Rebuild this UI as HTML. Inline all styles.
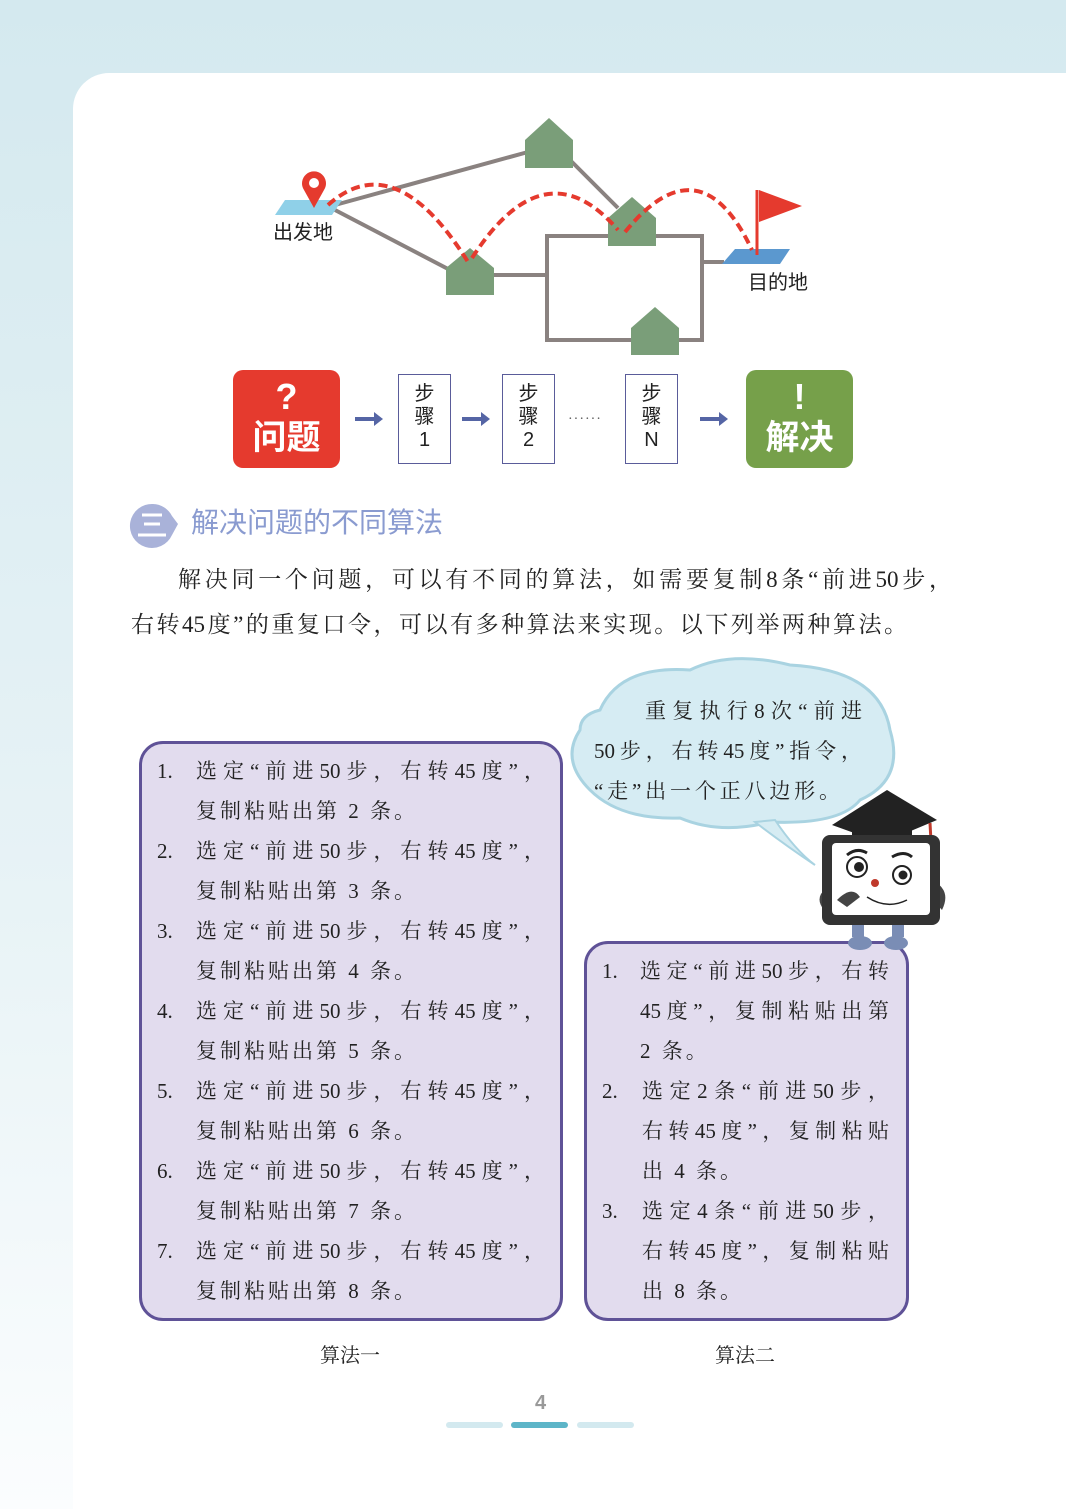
<!DOCTYPE html>
<html><head><meta charset="utf-8"><style>
body{margin:0;width:1066px;height:1509px;position:relative;overflow:hidden;background:linear-gradient(#d4e9ef,#e8f3f6 60%,#fbfdfe);font-family:"Liberation Serif","Noto Serif CJK SC",serif;color:#222}
.card{position:absolute;left:73px;top:73px;right:0;bottom:0;background:#fff;border-top-left-radius:36px}
.abs{position:absolute}
.j{position:absolute;text-align:justify;text-align-last:justify;white-space:nowrap;font-size:21px;line-height:24px}
.n{position:absolute;font-size:21px;line-height:24px}
.box{position:absolute;background:#e2dcee;border:3px solid #5f5297;border-radius:24px;box-sizing:border-box}
.step{position:absolute;top:374px;width:53px;height:90px;border:1.5px solid #5a5c9a;box-sizing:border-box;font-family:"Liberation Sans","Noto Sans CJK SC",sans-serif;font-size:20px;line-height:23px;text-align:center;padding-top:8px;background:#fff}
.big{position:absolute;top:370px;width:107px;height:98px;border-radius:10px;color:#fff;font-family:"Liberation Sans","Noto Sans CJK SC",sans-serif;font-weight:bold;text-align:center}
</style></head><body>
<div class="card"></div>
<svg class="abs" style="left:0;top:0" width="1066" height="480">
<g stroke="#8a8280" stroke-width="4" fill="none">
<line x1="335" y1="205" x2="528" y2="152"/><line x1="335" y1="210" x2="450" y2="270"/>
<line x1="570" y1="160" x2="618" y2="208"/><line x1="494" y1="275" x2="547" y2="275"/>
<rect x="547" y="236" width="155" height="104"/><line x1="702" y1="262" x2="724" y2="262"/>
</g>
<g fill="#7a9e79">
<polygon points="525,168 525,140 549,118 573,140 573,168"/>
<polygon points="446,295 446,268 470,248 494,268 494,295"/>
<polygon points="608,246 608,218 632,197 656,218 656,246"/>
<polygon points="631,355 631,328 655,307 679,328 679,355"/>
</g>
<polygon points="285,200 342,200 332,215 275,215" fill="#8fd0e8"/>
<polygon points="735,249 790,249 780,264 722,264" fill="#5b98cf"/>
<path d="M314,208 L304,190 A12,12 0 1 1 324,190 Z" fill="#e53a2e"/><circle cx="314" cy="183" r="5" fill="#fff"/>
<line x1="757" y1="190" x2="757" y2="255" stroke="#e53a2e" stroke-width="3"/>
<polygon points="759,190 802,206 759,222" fill="#e53a2e"/>
<g stroke="#e53a2e" stroke-width="4" stroke-dasharray="9,5" fill="none">
<path d="M328,205 Q395,145 468,262"/><path d="M472,258 Q545,145 618,230"/><path d="M625,232 Q700,140 752,250"/>
</g>
<text x="273" y="239" font-family="Liberation Sans,Noto Sans CJK SC,sans-serif" font-size="20" fill="#222">出发地</text>
<text x="748" y="289" font-family="Liberation Sans,Noto Sans CJK SC,sans-serif" font-size="20" fill="#222">目的地</text>
<g fill="#5565a5"><rect x="355" y="417" width="20" height="4"/><polygon points="374,412 383,419 374,426"/>
<rect x="462" y="417" width="20" height="4"/><polygon points="481,412 490,419 481,426"/>
<rect x="700" y="417" width="20" height="4"/><polygon points="719,412 728,419 719,426"/></g>
<text x="568" y="423" font-size="14" fill="#555" letter-spacing="1">······</text>
</svg>
<div class="big" style="left:233px;background:#e53a2e"><div style="font-size:36px;line-height:42px;margin-top:6px">?</div><div style="font-size:34px;line-height:40px">问题</div></div>
<div class="big" style="left:746px;background:#76a04a"><div style="font-size:36px;line-height:42px;margin-top:6px">!</div><div style="font-size:34px;line-height:40px">解决</div></div>
<div class="step" style="left:398px">步<br>骤<br>1</div>
<div class="step" style="left:502px">步<br>骤<br>2</div>
<div class="step" style="left:625px">步<br>骤<br>N</div>
<svg class="abs" style="left:128px;top:502px" width="50" height="46"><path d="M25,2 A22,22 0 1 0 44,33 L50,22 L44,14 A22,22 0 0 0 25,2Z" fill="#a9b2d9"/><g stroke="#fff" stroke-width="3"><line x1="14" y1="13" x2="34" y2="13"/><line x1="16" y1="22" x2="32" y2="22"/><line x1="10" y1="33" x2="38" y2="33"/></g></svg>
<div class="abs" style="left:191px;top:505px;font-family:'Liberation Sans','Noto Sans CJK SC',sans-serif;font-size:28px;line-height:36px;color:#8a9bd0">解决问题的不同算法</div>
<div class="j" style="left:178px;top:566px;width:774px;font-size:23px;line-height:28px">解决同一个问题，可以有不同的算法，如需要复制8条“前进50步，</div>
<div class="j" style="left:131px;top:611px;width:776px;font-size:23px;line-height:28px">右转45度”的重复口令，可以有多种算法来实现。以下列举两种算法。</div>
<svg class="abs" style="left:560px;top:650px" width="340" height="230">
<path d="M40,60 Q60,15 130,20 Q170,0 230,15 Q320,20 330,80 Q345,130 300,150 Q280,175 210,172 Q160,185 120,168 Q60,170 30,140 Q0,110 20,80 Q20,65 40,60Z" fill="#d6ecf3" stroke="#a9d3e1" stroke-width="3"/>
<path d="M215,170 Q235,200 255,215 Q225,195 195,172Z" fill="#d6ecf3" stroke="#a9d3e1" stroke-width="2"/>
</svg>
<div class="j" style="left:645px;top:699px;width:217px">重复执行8次“前进</div>
<div class="j" style="left:594px;top:739px;width:268px">50步，右转45度”指令，</div>
<div class="j" style="left:594px;top:779px;width:246px">“走”出一个正八边形。</div>
<div class="box" style="left:139px;top:741px;width:424px;height:580px"></div>
<div class="box" style="left:584px;top:941px;width:325px;height:380px"></div>
<svg class="abs" style="left:812px;top:785px" width="145" height="170">
<polygon points="20,40 75,5 125,35 70,58" fill="#222"/><rect x="40" y="38" width="60" height="22" fill="#222"/>
<path d="M118,38 L120,75" stroke="#c0392b" stroke-width="3"/>
<path d="M20,100 Q0,110 12,125 L25,112Z" fill="#444"/><path d="M120,95 Q140,105 130,125 L118,112Z" fill="#444"/>
<rect x="10" y="50" width="118" height="90" rx="8" fill="#333"/><rect x="20" y="58" width="98" height="72" rx="4" fill="#fff"/>
<circle cx="45" cy="82" r="10" fill="#fff" stroke="#222" stroke-width="2"/><circle cx="47" cy="82" r="5" fill="#222"/>
<circle cx="90" cy="90" r="9" fill="#fff" stroke="#222" stroke-width="2"/><circle cx="91" cy="90" r="4.5" fill="#222"/>
<circle cx="63" cy="98" r="4" fill="#c0392b"/><path d="M55,112 Q75,125 95,115" stroke="#222" fill="none" stroke-width="1.5"/>
<path d="M35,70 Q45,62 55,68 M80,72 Q92,65 100,72" stroke="#222" stroke-width="3" fill="none"/>
<path d="M25,115 Q40,100 48,112 L35,122Z" fill="#444"/>
<rect x="40" y="140" width="12" height="12" fill="#7a8db5"/><rect x="80" y="140" width="12" height="12" fill="#7a8db5"/>
<ellipse cx="48" cy="158" rx="12" ry="7" fill="#7a8db5"/><ellipse cx="84" cy="158" rx="12" ry="7" fill="#7a8db5"/>
</svg>
<div class="n" style="left:157px;top:759px">1.</div>
<div class="n" style="left:157px;top:839px">2.</div>
<div class="n" style="left:157px;top:919px">3.</div>
<div class="n" style="left:157px;top:999px">4.</div>
<div class="n" style="left:157px;top:1079px">5.</div>
<div class="n" style="left:157px;top:1159px">6.</div>
<div class="n" style="left:157px;top:1239px">7.</div>
<div class="j" style="left:196px;top:759px;width:349px">选定“前进50步，右转45度”，</div>
<div class="abs" style="left:196px;top:799px;font-size:21px;line-height:24px;letter-spacing:3px">复制粘贴出第 2 条。</div>
<div class="j" style="left:196px;top:839px;width:349px">选定“前进50步，右转45度”，</div>
<div class="abs" style="left:196px;top:879px;font-size:21px;line-height:24px;letter-spacing:3px">复制粘贴出第 3 条。</div>
<div class="j" style="left:196px;top:919px;width:349px">选定“前进50步，右转45度”，</div>
<div class="abs" style="left:196px;top:959px;font-size:21px;line-height:24px;letter-spacing:3px">复制粘贴出第 4 条。</div>
<div class="j" style="left:196px;top:999px;width:349px">选定“前进50步，右转45度”，</div>
<div class="abs" style="left:196px;top:1039px;font-size:21px;line-height:24px;letter-spacing:3px">复制粘贴出第 5 条。</div>
<div class="j" style="left:196px;top:1079px;width:349px">选定“前进50步，右转45度”，</div>
<div class="abs" style="left:196px;top:1119px;font-size:21px;line-height:24px;letter-spacing:3px">复制粘贴出第 6 条。</div>
<div class="j" style="left:196px;top:1159px;width:349px">选定“前进50步，右转45度”，</div>
<div class="abs" style="left:196px;top:1199px;font-size:21px;line-height:24px;letter-spacing:3px">复制粘贴出第 7 条。</div>
<div class="j" style="left:196px;top:1239px;width:349px">选定“前进50步，右转45度”，</div>
<div class="abs" style="left:196px;top:1279px;font-size:21px;line-height:24px;letter-spacing:3px">复制粘贴出第 8 条。</div>
<div class="n" style="left:602px;top:959px">1.</div>
<div class="n" style="left:602px;top:1079px">2.</div>
<div class="n" style="left:602px;top:1199px">3.</div>
<div class="j" style="left:640px;top:959px;width:249px">选定“前进50步，右转</div>
<div class="j" style="left:640px;top:999px;width:249px">45度”，复制粘贴出第</div>
<div class="abs" style="left:640px;top:1039px;font-size:21px;line-height:24px;letter-spacing:3px">2 条。</div>
<div class="j" style="left:642px;top:1079px;width:247px">选定2条“前进50步，</div>
<div class="j" style="left:642px;top:1119px;width:247px">右转45度”，复制粘贴</div>
<div class="abs" style="left:642px;top:1159px;font-size:21px;line-height:24px;letter-spacing:3px">出 4 条。</div>
<div class="j" style="left:642px;top:1199px;width:247px">选定4条“前进50步，</div>
<div class="j" style="left:642px;top:1239px;width:247px">右转45度”，复制粘贴</div>
<div class="abs" style="left:642px;top:1279px;font-size:21px;line-height:24px;letter-spacing:3px">出 8 条。</div>
<div class="abs" style="left:320px;top:1339px;font-size:20px">算法一</div>
<div class="abs" style="left:715px;top:1339px;font-size:20px">算法二</div>
<div class="abs" style="left:535px;top:1392px;font-family:'Liberation Sans',sans-serif;font-weight:bold;font-size:20px;color:#999">4</div>
<div class="abs" style="left:446px;top:1422px;width:57px;height:6px;border-radius:3px;background:#d3e9ef"></div>
<div class="abs" style="left:511px;top:1422px;width:57px;height:6px;border-radius:3px;background:#5db5c8"></div>
<div class="abs" style="left:577px;top:1422px;width:57px;height:6px;border-radius:3px;background:#d3e9ef"></div>
</body></html>
